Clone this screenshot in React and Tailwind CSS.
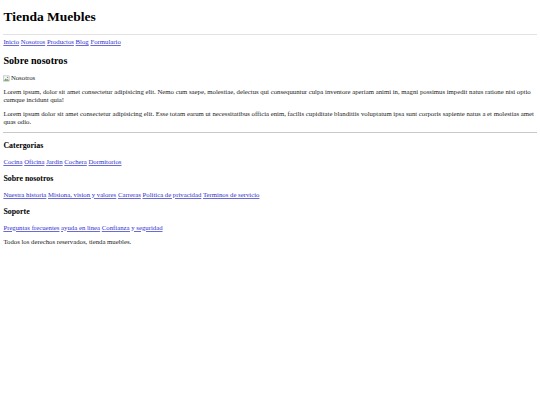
const navLinks = ['Inicio', 'Nosotros', 'Productos', 'Blog', 'Formulario'];

const footerGroups = [
  { title: 'Catergorias', links: ['Cocina', 'Oficina', 'Jardin', 'Cochera', 'Dormitorios'] },
  {
    title: 'Sobre nosotros',
    links: ['Nuestra historia', 'Misiona, vision y valores', 'Carreras', 'Politica de privacidad', 'Terminos de servicio'],
  },
  { title: 'Soporte', links: ['Preguntas frecuentes', 'ayuda en linea', 'Confianza y seguridad'] },
];

function LinkRow({ links }) {
  return (
    <p>
      {links.map((l, i) => (
        <span key={l}>
          <a href="#" className="text-[#3030d0] underline decoration-[#6a6ad8]">
            {l}
          </a>
          {i < links.length - 1 ? ' ' : ''}
        </span>
      ))}
    </p>
  );
}

function BrokenImage({ alt }) {
  return (
    <span className="inline-flex items-center">
      <svg width="7" height="7" viewBox="0 0 16 16" className="mr-[0.5px]">
        <rect x="1" y="2" width="13" height="12" fill="#f4f4f4" stroke="#9a9a9a" strokeWidth="1" />
        <path d="M2 13 L6 8 L9 11 L11 9 L14 13 Z" fill="#5fa04e" />
        <circle cx="10.5" cy="5.5" r="1.5" fill="#4a8fd6" />
      </svg>
      {alt}
    </span>
  );
}

export default function App() {
  return (
    <div className="min-h-screen bg-white px-[3.375px] pt-[9px] pb-[3.375px] font-['Liberation_Serif','Times_New_Roman',serif] text-[6.75px] leading-[1.15] text-[#1a1a1a]">
      <header>
        <h1 className="mb-[9px] text-[13.5px] font-bold leading-[1.15] text-black">Tienda Muebles</h1>
        <div className="h-[1.5px] bg-[#e2e2e2]" />
        <nav className="mt-[3.375px]">
          <LinkRow links={navLinks} />
        </nav>
      </header>

      <main>
        <h2 className="mt-[8.4px] mb-[8.2px] text-[10.125px] font-bold leading-[1.15] text-black">Sobre nosotros</h2>
        <div className="h-[7.3px] leading-[7.3px]">
          <BrokenImage alt="Nosotros" />
        </div>
        <p className="mt-[6.6px]">
          Lorem ipsum, dolor sit amet consectetur adipisicing elit. Nemo cum saepe, molestiae, delectus qui consequuntur culpa
          inventore aperiam animi in, magni possimus impedit natus ratione nisi optio cumque incidunt quia!
        </p>
        <p className="mt-[6.6px]">
          Lorem ipsum dolor sit amet consectetur adipisicing elit. Esse totam earum ut necessitatibus officia enim, facilis
          cupiditate blanditiis voluptatum ipsa sunt corporis sapiente natus a et molestias amet quas odio.
        </p>
      </main>

      <footer>
        <div className="mt-[6.6px] h-px bg-[#c8c8c8]" />
        {footerGroups.map((g) => (
          <div key={g.title}>
            <h3 className="mt-[7.9px] mb-[7.9px] text-[7.9px] font-bold leading-[1.15] text-black">{g.title}</h3>
            <LinkRow links={g.links} />
          </div>
        ))}
        <p className="mt-[6.75px]">Todos los derechos reservados, tienda muebles.</p>
      </footer>
    </div>
  );
}
